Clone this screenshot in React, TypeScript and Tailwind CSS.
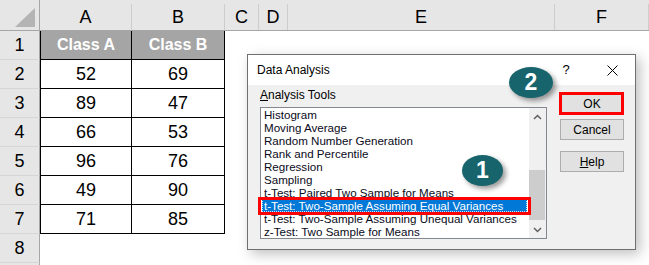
import React from "react";

const letters = ["A", "B", "C", "D", "E", "F"];

const rows: [string, string][] = [
    ["Class A", "Class B"],
    ["52", "69"],
    ["89", "47"],
    ["66", "53"],
    ["96", "76"],
    ["49", "90"],
    ["71", "85"],
];

const tools = [
    "Histogram",
    "Moving Average",
    "Random Number Generation",
    "Rank and Percentile",
    "Regression",
    "Sampling",
    "t-Test: Paired Two Sample for Means",
    "t-Test: Two-Sample Assuming Equal Variances",
    "t-Test: Two-Sample Assuming Unequal Variances",
    "z-Test: Two Sample for Means",
];

function Badge({ n, className }: { n: string; className: string }) {
    return (
        <div
            className={`absolute rounded-[50%] bg-[#17646c] text-white font-bold text-[23px] flex items-center justify-center shadow-[3px_3px_5px_rgba(0,0,0,0.4)] ${className}`}
        >
            {n}
        </div>
    );
}

function Chevron({ up }: { up?: boolean }) {
    return (
        <svg width="9" height="6" viewBox="0 0 9 6">
            <path
                d={up ? "M1 5 L4.5 1.5 L8 5" : "M1 1 L4.5 4.5 L8 1"}
                fill="none"
                stroke="#606060"
                strokeWidth="1.5"
            />
        </svg>
    );
}

export default function App() {
    return (
        <div className="relative w-[649px] h-[265px] overflow-hidden bg-white font-['Liberation_Sans',Arial,sans-serif] text-black">
            {/* sheet grid */}
            <div className="grid grid-cols-[40px_92px_93px_34px_29px_267px_1fr] grid-rows-[31px_repeat(9,29px)]">
                {/* corner */}
                <div className="bg-[#e6e6e6] border-r border-b border-r-[#a6a6a6] border-b-[#a6a6a6] flex items-end justify-end pr-[4px] pb-[3px]">
                    <svg width="20" height="19" viewBox="0 0 20 19">
                        <polygon points="20,0 20,19 0,19" fill="#b4b4b4" />
                    </svg>
                </div>
                {letters.map((l) => (
                    <div key={l} className="bg-[#e6e6e6] border-b border-[#a6a6a6] pt-1">
                        <div className="h-full border-r border-[#cdcdcd] flex items-center justify-center text-[18px]">
                            {l}
                        </div>
                    </div>
                ))}

                {Array.from({ length: 9 }).map((_, r) => (
                    <React.Fragment key={r}>
                        <div className="bg-[#e6e6e6] border-r border-b border-r-[#a6a6a6] border-b-[#d6d6d6] flex items-center justify-center text-[18px]">
                            {r < 8 ? r + 1 : ""}
                        </div>
                        {r < 7 ? (
                            <>
                                <div
                                    className={`border-l border-r border-b border-black flex items-center justify-center ${
                                        r === 0 ? "bg-[#a5a5a5] text-white font-bold text-[16px]" : "text-[18px]"
                                    }`}
                                >
                                    {rows[r][0]}
                                </div>
                                <div
                                    className={`border-r border-b border-black flex items-center justify-center ${
                                        r === 0 ? "bg-[#a5a5a5] text-white font-bold text-[16px]" : "text-[18px]"
                                    }`}
                                >
                                    {rows[r][1]}
                                </div>
                            </>
                        ) : (
                            <>
                                <div />
                                <div />
                            </>
                        )}
                        <div />
                        <div />
                        <div />
                        <div />
                    </React.Fragment>
                ))}
            </div>

            {/* Data Analysis dialog */}
            <div className="absolute left-[247px] top-[54px] w-[389px] h-[196px] border border-[#6f6f6f] bg-[#f0f0f0] shadow-[4px_4px_12px_rgba(0,0,0,0.25)] flex flex-col text-[12px]">
                <div className="h-[30px] bg-white flex items-center pl-[9px]">
                    <span>Data Analysis</span>
                    <div className="ml-auto flex items-center h-full">
                        <span className="w-[46px] text-center text-[13px]">?</span>
                        <span className="w-[46px] h-full flex items-center justify-center">
                            <svg width="11" height="11" viewBox="0 0 11 11">
                                <path d="M0.5 0.5 L10.5 10.5 M10.5 0.5 L0.5 10.5" stroke="#000" strokeWidth="1" />
                            </svg>
                        </span>
                    </div>
                </div>

                <div className="flex-1 flex pl-[12px]">
                    <div className="flex flex-col">
                        <div className="mt-[3px] h-[14px] leading-[14px] text-[12px]">
                            <span className="underline">A</span>nalysis Tools
                        </div>
                        <div className="mt-[5px] w-[287px] h-[132px] border border-[#828790] bg-white flex">
                            <div className="flex-1 overflow-hidden text-[11.6px]">
                                {tools.map((t, i) =>
                                    i === 7 ? (
                                        <div
                                            key={t}
                                            className="h-[13px] leading-[13px] ml-px mr-[2px] pl-[2px] bg-[#0078d7] text-white outline-1 outline-dotted outline-offset-[-1px] outline-[#cfe4f7] whitespace-nowrap"
                                        >
                                            {t}
                                        </div>
                                    ) : (
                                        <div key={t} className="h-[13px] leading-[13px] pl-[3px] text-[#0a0a20] whitespace-nowrap">
                                            {t}
                                        </div>
                                    )
                                )}
                            </div>
                            <div className="w-[17px] bg-[#f0f0f0] flex flex-col">
                                <div className="h-[17px] flex items-center justify-center">
                                    <Chevron up />
                                </div>
                                <div className="flex-1 pt-[45px]">
                                    <div className="h-[50px] mr-px bg-[#cdcdcd]" />
                                </div>
                                <div className="h-[17px] flex items-center justify-center">
                                    <Chevron />
                                </div>
                            </div>
                        </div>
                    </div>

                    <div className="ml-[13px] w-[64px] pt-[8px] flex flex-col">
                        <button className="h-[21px] bg-[#e1e1e1] border border-[#adadad]">OK</button>
                        <button className="mt-[5px] h-[21px] bg-[#e1e1e1] border border-[#adadad]">Cancel</button>
                        <button className="mt-[11px] h-[21px] bg-[#e1e1e1] border border-[#adadad]">
                            <span className="underline">H</span>elp
                        </button>
                    </div>
                </div>
            </div>

            {/* annotation frames */}
            <div className="absolute left-[258px] top-[197px] w-[273px] h-[18px] border-[3px] border-[#ff0000]" />
            <div className="absolute left-[559px] top-[92px] w-[65px] h-[23px] border-[3px] border-[#ff0000]" />

            <Badge n="2" className="left-[509px] top-[67px] w-[44px] h-[31px]" />
            <Badge n="1" className="left-[462px] top-[155px] w-[41px] h-[31px]" />
        </div>
    );
}
